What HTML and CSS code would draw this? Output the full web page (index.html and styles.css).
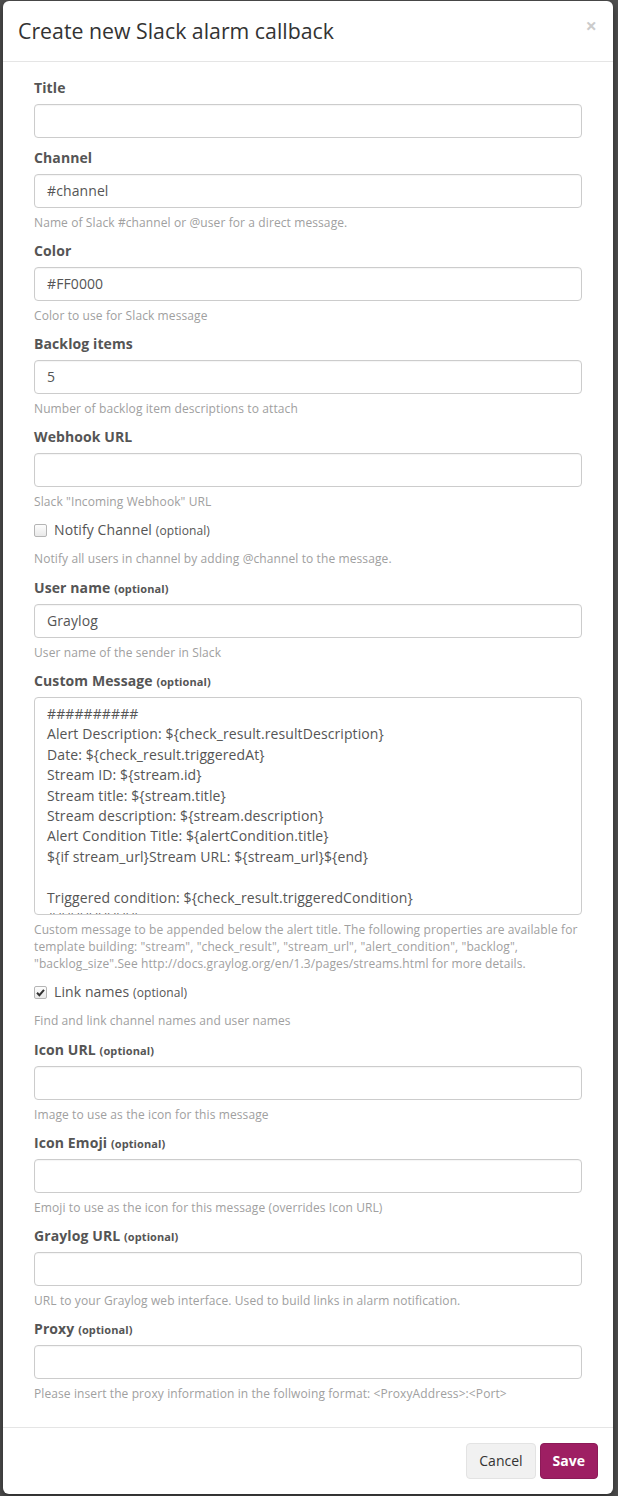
FILE: index.html
```html
<!DOCTYPE html>
<html>
<head>
<meta charset="utf-8">
<link rel="stylesheet" href="styles.css">
</head>
<body>
<div class="backdrop">
  <div class="modal">
    <div class="modal-header">
      <h4 class="modal-title">Create new Slack alarm callback</h4>
      <span class="close">×</span>
    </div>
    <div class="modal-body">
      <div class="group">
        <label class="lbl">Title</label>
        <div class="input"></div>
      </div>
      <div class="group">
        <label class="lbl">Channel</label>
        <div class="input">#channel</div>
        <p class="help">Name of Slack #channel or @user for a direct message.</p>
      </div>
      <div class="group">
        <label class="lbl">Color</label>
        <div class="input">#FF0000</div>
        <p class="help">Color to use for Slack message</p>
      </div>
      <div class="group">
        <label class="lbl">Backlog items</label>
        <div class="input">5</div>
        <p class="help">Number of backlog item descriptions to attach</p>
      </div>
      <div class="group">
        <label class="lbl">Webhook URL</label>
        <div class="input"></div>
        <p class="help">Slack "Incoming Webhook" URL</p>
      </div>
      <div class="group check-group">
        <div class="check-row"><span class="box"></span><span class="check-text">Notify Channel <small class="opt-n">(optional)</small></span></div>
        <p class="help">Notify all users in channel by adding @channel to the message.</p>
      </div>
      <div class="group">
        <label class="lbl">User name <small class="opt">(optional)</small></label>
        <div class="input">Graylog</div>
        <p class="help">User name of the sender in Slack</p>
      </div>
      <div class="group">
        <label class="lbl">Custom Message <small class="opt">(optional)</small></label>
        <div class="textarea">##########
Alert Description: ${check_result.resultDescription}
Date: ${check_result.triggeredAt}
Stream ID: ${stream.id}
Stream title: ${stream.title}
Stream description: ${stream.description}
Alert Condition Title: ${alertCondition.title}
${if stream_url}Stream URL: ${stream_url}${end}

Triggered condition: ${check_result.triggeredCondition}
##########</div>
        <p class="help">Custom message to be appended below the alert title. The following properties are available for template building: "stream", "check_result", "stream_url", "alert_condition", "backlog", "backlog_size".See http://docs.graylog.org/en/1.3/pages/streams.html for more details.</p>
      </div>
      <div class="group check-group">
        <div class="check-row"><span class="box checked"><svg viewBox="0 0 13 13" width="13" height="13"><path d="M3 6.8 L5.4 9.2 L10 3.8" fill="none" stroke="#333" stroke-width="2"/></svg></span><span class="check-text">Link names <small class="opt-n">(optional)</small></span></div>
        <p class="help">Find and link channel names and user names</p>
      </div>
      <div class="group">
        <label class="lbl">Icon URL <small class="opt">(optional)</small></label>
        <div class="input"></div>
        <p class="help">Image to use as the icon for this message</p>
      </div>
      <div class="group">
        <label class="lbl">Icon Emoji <small class="opt">(optional)</small></label>
        <div class="input"></div>
        <p class="help">Emoji to use as the icon for this message (overrides Icon URL)</p>
      </div>
      <div class="group">
        <label class="lbl">Graylog URL <small class="opt">(optional)</small></label>
        <div class="input"></div>
        <p class="help">URL to your Graylog web interface. Used to build links in alarm notification.</p>
      </div>
      <div class="group">
        <label class="lbl">Proxy <small class="opt">(optional)</small></label>
        <div class="input"></div>
        <p class="help">Please insert the proxy information in the follwoing format: &lt;ProxyAddress&gt;:&lt;Port&gt;</p>
      </div>
    </div>
    <div class="modal-footer">
      <button class="btn btn-default">Cancel</button>
      <button class="btn btn-primary">Save</button>
    </div>
  </div>
</div>
</body>
</html>
```

FILE: styles.css
```css
* { box-sizing: border-box; }
html, body { margin: 0; padding: 0; }
body {
  background: #4f4f4f;
  font-family: "Open Sans", "Liberation Sans", sans-serif;
  font-size: 14px;
  letter-spacing: 0.1px;
  color: #555;
  width: 618px;
  height: 1496px;
  overflow: hidden;
}
.backdrop {
  padding: 1px 5px 0 3px;
}
.modal {
  width: 610px;
  background: #fff;
  border-radius: 6px;
  box-shadow: 0 3px 9px rgba(0,0,0,0.5);
}
.modal-header {
  display: flex;
  justify-content: space-between;
  align-items: flex-start;
  padding: 15px;
  border-bottom: 1px solid #e5e5e5;
}
.modal-title {
  margin: 0;
  font-size: 21.3px;
  font-weight: 400;
  letter-spacing: 0;
  line-height: 30px;
  color: #333;
}
.close {
  font-size: 20px;
  font-weight: 700;
  line-height: 1;
  color: #000;
  opacity: 0.2;
  margin-top: 0;
  margin-right: 1px;
}
.modal-body {
  padding: 16px 31px 15px 31px;
}
.group {
  display: flex;
  flex-direction: column;
  margin-bottom: 10px;
}
.lbl {
  display: block;
  font-weight: 700;
  line-height: 20px;
  margin-bottom: 6px;
  color: #555;
}
.opt {
  font-size: 11px;
  font-weight: 700;
  line-height: 0;
}
.opt-n {
  font-size: 12px;
  font-weight: 400;
  line-height: 0;
}
.input {
  height: 34px;
  border: 1px solid #ccc;
  border-radius: 4px;
  padding: 6px 12px;
  line-height: 20px;
  color: #555;
  box-shadow: inset 0 1px 1px rgba(0,0,0,0.04);
}
.textarea {
  height: 218px;
  border: 1px solid #ccc;
  border-radius: 4px;
  padding: 6px 12px;
  line-height: 20.4px;
  color: #555;
  white-space: pre;
  overflow: hidden;
}
.help {
  margin: 6px 0 0 0;
  font-size: 12px;
  line-height: 17px;
  color: #a0a0a0;
}
.check-group {
  margin-bottom: 11px;
}
.check-group .help {
  margin-top: 10px;
}
.check-row {
  display: flex;
  align-items: center;
  height: 20px;
}
.box {
  width: 13px;
  height: 13px;
  border: 1px solid #b5b5b5;
  border-radius: 2px;
  background: linear-gradient(#fdfdfd, #e9e9e9);
  margin-right: 7px;
  display: flex;
  align-items: center;
  justify-content: center;
  overflow: hidden;
}
.box svg { display: block; flex: none; }
.check-text {
  color: #555;
  line-height: 20px;
}
.modal-footer {
  border-top: 1px solid #e5e5e5;
  padding: 15px;
  display: flex;
  justify-content: flex-end;
  gap: 4px;
}
.btn {
  font-family: "Open Sans", "Liberation Sans", sans-serif;
  font-size: 14px;
  line-height: 20px;
  padding: 7px 12px;
  border-radius: 4px;
  border: 1px solid transparent;
}
.btn-default {
  background: #f1f1f1;
  border-color: #e3e3e3;
  color: #333;
}
.btn-primary {
  background: #9e1f63;
  border-color: #8c1b58;
  color: #fff;
  font-weight: 700;
}
```
